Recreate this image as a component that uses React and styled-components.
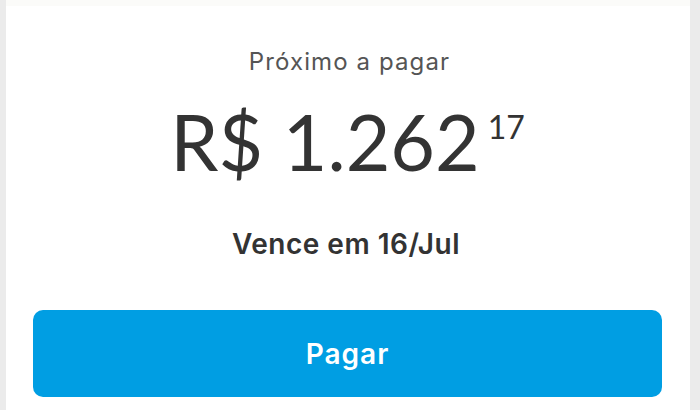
import React from 'react'
import styled, { createGlobalStyle } from 'styled-components'

const Global = createGlobalStyle`
  html, body {
    margin: 0;
    padding: 0;
    background: #ebebeb;
  }
  body {
    font-family: Inter, Lato, sans-serif;
    -webkit-font-smoothing: antialiased;
  }
`

function App() {
  const valor = { reais: '1.262', centavos: '17' }

  return (
    <>
      <Global />
      <Card>
        <Label>Próximo a pagar</Label>
        <Amount>
          <span className='main'>R$ {valor.reais}</span>
          <sup className='cents'>{valor.centavos}</sup>
        </Amount>
        <DueDate>Vence em 16/Jul</DueDate>
        <PayButton type='button'>Pagar</PayButton>
      </Card>
    </>
  )
}

export default App

const Card = styled.div`
    height: 410px;
    box-sizing: border-box;
    margin: 0 10px 0 6px;
    padding: 49px 28px 0 27px;
    background-color: #fff;
    border-top: 6px solid #fbfbf9;
    display: flex;
    flex-direction: column;
    align-items: center;
`

const Label = styled.p`
    margin: -5px 0 0 4px;
    font-size: 24px;
    line-height: 1;
    letter-spacing: 1.1px;
    color: #555;
`

const Amount = styled.div`
    display: flex;
    align-items: flex-start;
    margin-top: 29px;
    color: #333;
    font-family: Lato, Inter, sans-serif;

    .main{
        font-size: 77px;
        line-height: 1;
    }

    .cents{
        font-size: 32px;
        line-height: 1;
        margin: 8px 0 0 8px;
        vertical-align: baseline;
    }
`

const DueDate = styled.p`
    margin: 50px 0 0 -3px;
    font-size: 28px;
    line-height: 1;
    letter-spacing: 0.5px;
    font-weight: 600;
    color: #333;
`

const PayButton = styled.button`
    margin-top: 52px;
    width: 100%;
    height: 87px;
    border: none;
    outline: none;
    border-radius: 10px;
    background-color: #009ee3;
    color: #fff;
    font-family: Inter, Lato, sans-serif;
    font-size: 28px;
    font-weight: 600;
    letter-spacing: 1px;
    cursor: pointer;
`
